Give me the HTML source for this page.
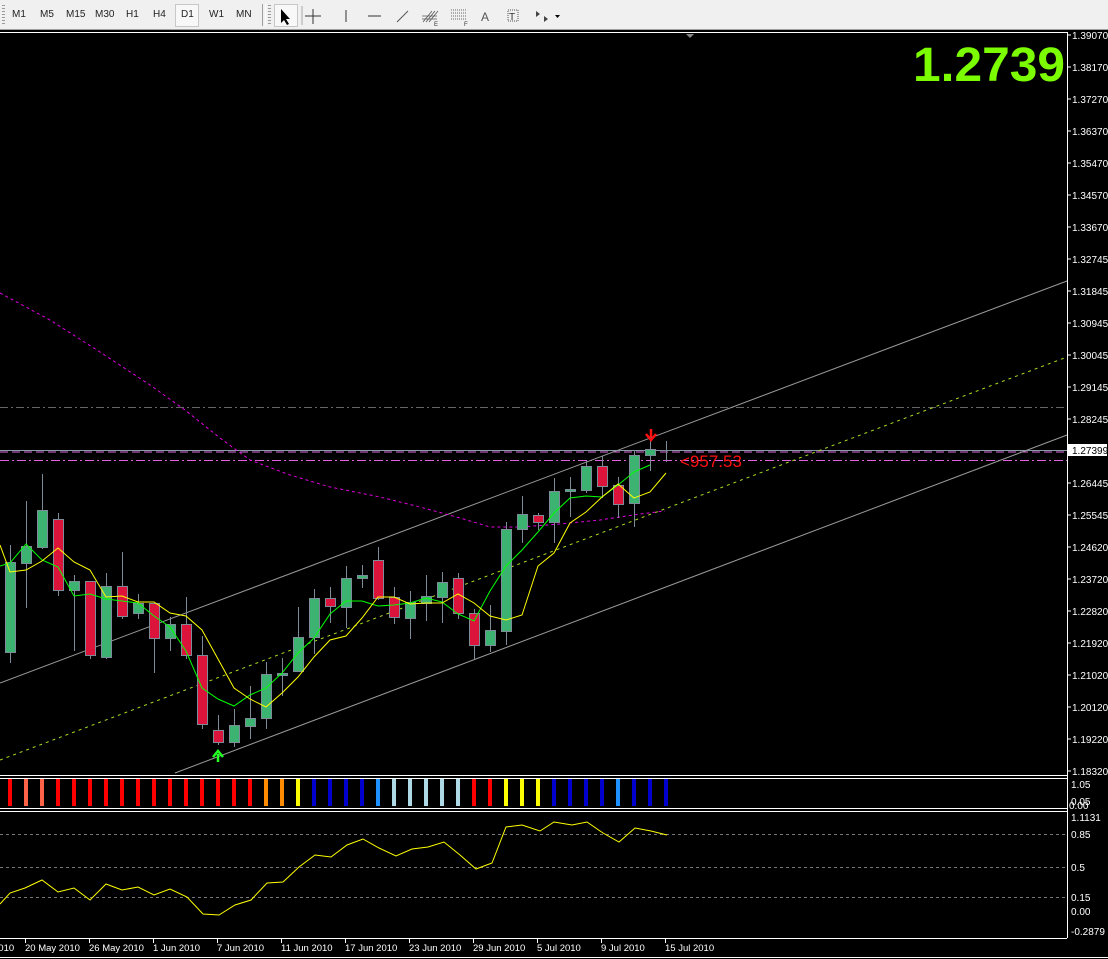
<!DOCTYPE html>
<html><head><meta charset="utf-8"><style>
html,body{margin:0;padding:0;background:#000;width:1108px;height:959px;overflow:hidden;font-family:"Liberation Sans",sans-serif}
#tb{position:absolute;left:0;top:0;width:1108px;height:29px;background:#f0f0f0;border-bottom:1px solid #a0a0a0}
.b{position:absolute;top:9px;font-size:10px;color:#222}
.sep{position:absolute;top:4px;width:2px;height:22px;border-left:1px solid #a0a0a0;border-right:1px solid #fff}
.grip{position:absolute;top:5px;width:3px;height:20px;background:repeating-linear-gradient(#999 0 1px,transparent 1px 3px)}
svg{position:absolute;left:0;top:0}
</style></head><body>
<div id="tb">
<div class="grip" style="left:2px"></div>
<span class="b" style="left:12px">M1</span>
<span class="b" style="left:40px">M5</span>
<span class="b" style="left:66px">M15</span>
<span class="b" style="left:95px">M30</span>
<span class="b" style="left:126px">H1</span>
<span class="b" style="left:153px">H4</span>
<div style="position:absolute;left:175px;top:4px;width:22px;height:21px;border:1px solid #c8c8c8;background:#f8f8f8"></div>
<span class="b" style="left:181px">D1</span>
<span class="b" style="left:209px">W1</span>
<span class="b" style="left:236px">MN</span>
<div class="sep" style="left:262px"></div>
<div class="grip" style="left:268px"></div>
<div style="position:absolute;left:274px;top:4px;width:22px;height:21px;border:1px solid #c8c8c8;background:#f8f8f8"></div>
<svg width="570" height="29" style="position:absolute;left:0;top:0">
<path d="M281 9 L281 23 L284 20 L287 25 L289 24 L286 19 L290 19 Z" fill="#000"/>
<path d="M313 9V24M305 16H321" stroke="#333"/>
<line x1="302" y1="6" x2="302" y2="25" stroke="#aaa"/>
<line x1="346" y1="10" x2="346" y2="22" stroke="#333"/>
<line x1="368" y1="16" x2="381" y2="16" stroke="#333"/>
<line x1="397" y1="22" x2="408" y2="11" stroke="#555"/>
<path d="M423 22L432 11M426 22L435 11M429 22L438 11M422 16H437M422 19H437" stroke="#555" stroke-width=".8"/>
<text x="434" y="26" font-size="6" fill="#333">E</text>
<path d="M451 10H466M451 13H466M451 16H466M451 19H466" stroke="#666" stroke-dasharray="1 1"/>
<text x="464" y="26" font-size="6" fill="#333">F</text>
<text x="481" y="21" font-size="12" fill="#555">A</text>
<rect x="508" y="10" width="10" height="11" fill="none" stroke="#555" stroke-dasharray="1 1"/>
<text x="509" y="20" font-size="10" fill="#333">T</text>
<path d="M536 11l4 3-4 3zM544 16l4 3-4 3z" fill="#444"/><path d="M555 15h5l-2.5 3z" fill="#000"/>
</svg>
</div>

<svg width="1108" height="959" viewBox="0 0 1108 959" style="top:0">
<g>
<line x1="0" y1="32.5" x2="1067" y2="32.5" stroke="#fff"/>
<line x1="1067.5" y1="32" x2="1067.5" y2="938" stroke="#fff"/>
<line x1="0" y1="775.5" x2="1067" y2="775.5" stroke="#fff"/>
<line x1="0" y1="778.5" x2="1067" y2="778.5" stroke="#fff"/>
<line x1="0" y1="808.5" x2="1067" y2="808.5" stroke="#fff"/>
<line x1="0" y1="811.5" x2="1067" y2="811.5" stroke="#fff"/>
<line x1="0" y1="938.5" x2="1067" y2="938.5" stroke="#fff"/>
<line x1="0" y1="957.5" x2="1108" y2="957.5" stroke="#fff"/>
<path d="M686 34h8l-4 4z" fill="#888"/>

<line x1="0" y1="407.5" x2="1067" y2="407.5" stroke="#666" stroke-dasharray="8 3 2 3"/>
<line x1="0" y1="450.5" x2="1067" y2="450.5" stroke="#8a9aaa"/>
<line x1="0" y1="452" x2="1067" y2="452" stroke="#e070e0" stroke-dasharray="8 4"/>
<line x1="0" y1="460.5" x2="1067" y2="460.5" stroke="#e060e0" stroke-dasharray="9 3 2 3"/>

<line x1="0" y1="683" x2="1067" y2="281" stroke="#999"/>
<line x1="175" y1="773" x2="1067" y2="435" stroke="#999"/>
<line x1="0" y1="760" x2="1067" y2="357" stroke="#aadd22" stroke-dasharray="3 4"/>

<polyline fill="none" stroke="#e000e0" stroke-dasharray="3 3" points="0,293 50,320 100,352 150,385 185,410 220,438 250,460 290,475 330,487 380,497 420,507 460,518 490,527 520,527 560,524 600,520 640,514 665,511"/>

<g stroke="#7d8b99" stroke-width="1">
<line x1="10.5" y1="545" x2="10.5" y2="663"/><rect x="5.5" y="562.5" width="10" height="90" fill="#3cb371"/>
<line x1="26.5" y1="501" x2="26.5" y2="608"/><rect x="21.5" y="546.5" width="10" height="17" fill="#3cb371"/>
<line x1="42.5" y1="474" x2="42.5" y2="549"/><rect x="37.5" y="510.5" width="10" height="37" fill="#3cb371"/>
<line x1="58.5" y1="513" x2="58.5" y2="596"/><rect x="53.5" y="519.5" width="10" height="71" fill="#dc143c"/>
<line x1="74.5" y1="575" x2="74.5" y2="651"/><rect x="69.5" y="581.5" width="10" height="9" fill="#3cb371"/>
<line x1="90.5" y1="581" x2="90.5" y2="659"/><rect x="85.5" y="581.5" width="10" height="74" fill="#dc143c"/>
<line x1="106.5" y1="573" x2="106.5" y2="659"/><rect x="101.5" y="586.5" width="10" height="71" fill="#3cb371"/>
<line x1="122.5" y1="552" x2="122.5" y2="619"/><rect x="117.5" y="586.5" width="10" height="30" fill="#dc143c"/>
<line x1="138.5" y1="594" x2="138.5" y2="619"/><rect x="133.5" y="603.5" width="10" height="10" fill="#3cb371"/>
<line x1="154.5" y1="603" x2="154.5" y2="673"/><rect x="149.5" y="603.5" width="10" height="35" fill="#dc143c"/>
<line x1="170.5" y1="617" x2="170.5" y2="651"/><rect x="165.5" y="624.5" width="10" height="14" fill="#3cb371"/>
<line x1="186.5" y1="597" x2="186.5" y2="659"/><rect x="181.5" y="624.5" width="10" height="31" fill="#dc143c"/>
<line x1="202.5" y1="636" x2="202.5" y2="729"/><rect x="197.5" y="655.5" width="10" height="69" fill="#dc143c"/>
<line x1="218.5" y1="715" x2="218.5" y2="745"/><rect x="213.5" y="730.5" width="10" height="12" fill="#dc143c"/>
<line x1="234.5" y1="709" x2="234.5" y2="747"/><rect x="229.5" y="725.5" width="10" height="17" fill="#3cb371"/>
<line x1="250.5" y1="686" x2="250.5" y2="739"/><rect x="245.5" y="718.5" width="10" height="8" fill="#3cb371"/>
<line x1="266.5" y1="662" x2="266.5" y2="729"/><rect x="261.5" y="674.5" width="10" height="44" fill="#3cb371"/>
<line x1="282.5" y1="658" x2="282.5" y2="696"/><rect x="277.5" y="673.5" width="10" height="2" fill="#3cb371"/>
<line x1="298.5" y1="607" x2="298.5" y2="671"/><rect x="293.5" y="637.5" width="10" height="34" fill="#3cb371"/>
<line x1="314.5" y1="589" x2="314.5" y2="654"/><rect x="309.5" y="598.5" width="10" height="39" fill="#3cb371"/>
<line x1="330.5" y1="587" x2="330.5" y2="623"/><rect x="325.5" y="598.5" width="10" height="8" fill="#dc143c"/>
<line x1="346.5" y1="566" x2="346.5" y2="628"/><rect x="341.5" y="578.5" width="10" height="29" fill="#3cb371"/>
<line x1="362.5" y1="565" x2="362.5" y2="588"/><rect x="357.5" y="575.5" width="10" height="3" fill="#3cb371"/>
<line x1="378.5" y1="547" x2="378.5" y2="600"/><rect x="373.5" y="560.5" width="10" height="38" fill="#dc143c"/>
<line x1="394.5" y1="587" x2="394.5" y2="624"/><rect x="389.5" y="597.5" width="10" height="20" fill="#dc143c"/>
<line x1="410.5" y1="591" x2="410.5" y2="639"/><rect x="405.5" y="602.5" width="10" height="16" fill="#3cb371"/>
<line x1="426.5" y1="575" x2="426.5" y2="621"/><rect x="421.5" y="596.5" width="10" height="7" fill="#3cb371"/>
<line x1="442.5" y1="572" x2="442.5" y2="623"/><rect x="437.5" y="582.5" width="10" height="15" fill="#3cb371"/>
<line x1="458.5" y1="573" x2="458.5" y2="619"/><rect x="453.5" y="578.5" width="10" height="35" fill="#dc143c"/>
<line x1="474.5" y1="609" x2="474.5" y2="659"/><rect x="469.5" y="613.5" width="10" height="32" fill="#dc143c"/>
<line x1="490.5" y1="605" x2="490.5" y2="652"/><rect x="485.5" y="630.5" width="10" height="15" fill="#3cb371"/>
<line x1="506.5" y1="522" x2="506.5" y2="645"/><rect x="501.5" y="529.5" width="10" height="102" fill="#3cb371"/>
<line x1="522.5" y1="496" x2="522.5" y2="543"/><rect x="517.5" y="514.5" width="10" height="15" fill="#3cb371"/>
<line x1="538.5" y1="513" x2="538.5" y2="530"/><rect x="533.5" y="515.5" width="10" height="7" fill="#dc143c"/>
<line x1="554.5" y1="478" x2="554.5" y2="543"/><rect x="549.5" y="491.5" width="10" height="31" fill="#3cb371"/>
<line x1="570.5" y1="477" x2="570.5" y2="517"/><rect x="565.5" y="489.5" width="10" height="2" fill="#3cb371"/>
<line x1="586.5" y1="461" x2="586.5" y2="493"/><rect x="581.5" y="466.5" width="10" height="24" fill="#3cb371"/>
<line x1="602.5" y1="456" x2="602.5" y2="498"/><rect x="597.5" y="466.5" width="10" height="20" fill="#dc143c"/>
<line x1="618.5" y1="477" x2="618.5" y2="518"/><rect x="613.5" y="485.5" width="10" height="19" fill="#dc143c"/>
<line x1="634.5" y1="450" x2="634.5" y2="527"/><rect x="629.5" y="455.5" width="10" height="48" fill="#3cb371"/>
<line x1="650.5" y1="441" x2="650.5" y2="471"/><rect x="645.5" y="449.5" width="10" height="6" fill="#3cb371"/>
<line x1="666.5" y1="441" x2="666.5" y2="462"/><line x1="661" y1="450.5" x2="672" y2="450.5"/>
</g>

<polyline fill="none" stroke="#00ff00" points="0,566 10,563 26,544 42,560 58,567 74,596 90,594 106,599 122,601 138,603 154,616 170,627 186,651 202,688 218,699 234,706 250,695 266,688 282,673 298,653 314,638 330,614 346,601 362,601 378,606 394,605 410,603 426,598 442,602 458,614 474,621 490,591 506,566 522,550 538,532 554,513 570,498 586,496 602,497 618,485 634,472 650,465"/>
<polyline fill="none" stroke="#ffff00" points="0,545 10,572 26,570 42,561 58,548 74,562 90,570 106,597 122,596 138,602 154,602 170,613 186,616 202,630 218,659 234,688 250,699 266,707 282,693 298,677 314,657 330,640 346,636 362,618 378,597 394,597 410,604 426,603 442,603 458,594 474,603 490,616 506,620 522,615 538,566 554,553 570,523 586,512 602,497 618,484 634,498 650,492 666,473"/>

<path d="M651 429v8M646 434l5 6 5-6" stroke="#ff1010" stroke-width="2.5" fill="none"/>
<path d="M218 762v-8M213 757l5-6 5 6" stroke="#22ff22" stroke-width="2.5" fill="none"/>

<text x="680" y="467" font-size="17" fill="#ff1010">&lt;957.53</text>
<text x="913" y="81" font-size="48" font-weight="bold" fill="#7cfc00" textLength="152" lengthAdjust="spacingAndGlyphs">1.2739</text>

<g font-size="10" fill="#fff">
<g stroke="#fff">
<line x1="1067" y1="35" x2="1071" y2="35"/><line x1="1067" y1="67" x2="1071" y2="67"/><line x1="1067" y1="99" x2="1071" y2="99"/><line x1="1067" y1="131" x2="1071" y2="131"/><line x1="1067" y1="163" x2="1071" y2="163"/><line x1="1067" y1="195" x2="1071" y2="195"/><line x1="1067" y1="227" x2="1071" y2="227"/><line x1="1067" y1="259" x2="1071" y2="259"/><line x1="1067" y1="291" x2="1071" y2="291"/><line x1="1067" y1="323" x2="1071" y2="323"/><line x1="1067" y1="355" x2="1071" y2="355"/><line x1="1067" y1="387" x2="1071" y2="387"/><line x1="1067" y1="419" x2="1071" y2="419"/><line x1="1067" y1="483" x2="1071" y2="483"/><line x1="1067" y1="515" x2="1071" y2="515"/><line x1="1067" y1="547" x2="1071" y2="547"/><line x1="1067" y1="579" x2="1071" y2="579"/><line x1="1067" y1="611" x2="1071" y2="611"/><line x1="1067" y1="643" x2="1071" y2="643"/><line x1="1067" y1="675" x2="1071" y2="675"/><line x1="1067" y1="707" x2="1071" y2="707"/><line x1="1067" y1="739" x2="1071" y2="739"/><line x1="1067" y1="771" x2="1071" y2="771"/>
</g>
<text x="1072" y="39">1.39070</text><text x="1072" y="71">1.38170</text><text x="1072" y="103">1.37270</text><text x="1072" y="135">1.36370</text><text x="1072" y="167">1.35470</text><text x="1072" y="199">1.34570</text><text x="1072" y="231">1.33670</text><text x="1072" y="263">1.32745</text><text x="1072" y="295">1.31845</text><text x="1072" y="327">1.30945</text><text x="1072" y="359">1.30045</text><text x="1072" y="391">1.29145</text><text x="1072" y="423">1.28245</text>
<rect x="1068" y="444" width="39" height="12" fill="#fff"/><text x="1072" y="454" fill="#000">1.27399</text>
<text x="1072" y="487">1.26445</text><text x="1072" y="519">1.25545</text><text x="1072" y="551">1.24620</text><text x="1072" y="583">1.23720</text><text x="1072" y="615">1.22820</text><text x="1072" y="647">1.21920</text><text x="1072" y="679">1.21020</text><text x="1072" y="711">1.20120</text><text x="1072" y="743">1.19220</text><text x="1072" y="775">1.18320</text>
<text x="1071" y="788">1.05</text><text x="1071" y="805">0.05</text><text x="1069" y="809">0.00</text>
<text x="1071" y="821">1.1131</text><text x="1071" y="838">0.85</text><text x="1071" y="871">0.5</text><text x="1071" y="901">0.15</text><text x="1071" y="915">0.00</text><text x="1071" y="935">-0.2879</text>
</g>

<g stroke-width="4">
<line x1="10" y1="779" x2="10" y2="806" stroke="#ff0000"/>
<line x1="26" y1="779" x2="26" y2="806" stroke="#ff6347"/>
<line x1="42" y1="779" x2="42" y2="806" stroke="#ff6347"/>
<line x1="58" y1="779" x2="58" y2="806" stroke="#ff0000"/><line x1="74" y1="779" x2="74" y2="806" stroke="#ff0000"/><line x1="90" y1="779" x2="90" y2="806" stroke="#ff0000"/><line x1="106" y1="779" x2="106" y2="806" stroke="#ff0000"/><line x1="122" y1="779" x2="122" y2="806" stroke="#ff0000"/><line x1="138" y1="779" x2="138" y2="806" stroke="#ff0000"/><line x1="154" y1="779" x2="154" y2="806" stroke="#ff0000"/><line x1="170" y1="779" x2="170" y2="806" stroke="#ff0000"/><line x1="186" y1="779" x2="186" y2="806" stroke="#ff0000"/><line x1="202" y1="779" x2="202" y2="806" stroke="#ff0000"/><line x1="218" y1="779" x2="218" y2="806" stroke="#ff0000"/><line x1="234" y1="779" x2="234" y2="806" stroke="#ff0000"/><line x1="250" y1="779" x2="250" y2="806" stroke="#ff0000"/>
<line x1="266" y1="779" x2="266" y2="806" stroke="#ff8c00"/><line x1="282" y1="779" x2="282" y2="806" stroke="#ff8c00"/>
<line x1="298" y1="779" x2="298" y2="806" stroke="#ffff00"/>
<line x1="314" y1="779" x2="314" y2="806" stroke="#0000cd"/><line x1="330" y1="779" x2="330" y2="806" stroke="#0000cd"/><line x1="346" y1="779" x2="346" y2="806" stroke="#0000cd"/><line x1="362" y1="779" x2="362" y2="806" stroke="#0000cd"/>
<line x1="378" y1="779" x2="378" y2="806" stroke="#1e90ff"/>
<line x1="394" y1="779" x2="394" y2="806" stroke="#add8e6"/><line x1="410" y1="779" x2="410" y2="806" stroke="#add8e6"/><line x1="426" y1="779" x2="426" y2="806" stroke="#add8e6"/><line x1="442" y1="779" x2="442" y2="806" stroke="#add8e6"/><line x1="458" y1="779" x2="458" y2="806" stroke="#add8e6"/>
<line x1="474" y1="779" x2="474" y2="806" stroke="#ff0000"/><line x1="490" y1="779" x2="490" y2="806" stroke="#ff0000"/>
<line x1="506" y1="779" x2="506" y2="806" stroke="#ffff00"/><line x1="522" y1="779" x2="522" y2="806" stroke="#ffff00"/><line x1="538" y1="779" x2="538" y2="806" stroke="#ffff00"/>
<line x1="554" y1="779" x2="554" y2="806" stroke="#0000cd"/><line x1="570" y1="779" x2="570" y2="806" stroke="#0000cd"/><line x1="586" y1="779" x2="586" y2="806" stroke="#0000cd"/><line x1="602" y1="779" x2="602" y2="806" stroke="#0000cd"/>
<line x1="618" y1="779" x2="618" y2="806" stroke="#1e90ff"/>
<line x1="634" y1="779" x2="634" y2="806" stroke="#0000cd"/><line x1="650" y1="779" x2="650" y2="806" stroke="#0000cd"/><line x1="666" y1="779" x2="666" y2="806" stroke="#0000cd"/>
</g>

<g stroke="#777" stroke-dasharray="3 3">
<line x1="0" y1="834.5" x2="1067" y2="834.5"/><line x1="0" y1="867.5" x2="1067" y2="867.5"/><line x1="0" y1="897.5" x2="1067" y2="897.5"/>
</g>
<polyline fill="none" stroke="#ffff00" points="0,904 10,893 25,888 42,880 58,892 74,888 90,900 106,884 122,890 138,887 154,895 170,889 187,897 203,914 219,915 235,905 251,900 267,883 283,882 299,867 315,855 331,857 347,845 363,839 379,848 396,856 412,849 428,847 444,842 460,855 476,869 492,863 506,827 522,825 540,831 554,822 572,825 587,822 603,833 619,842 635,828 651,831 667,835"/>

<g font-size="9.5" fill="#fff">
<g stroke="#fff"><line x1="25.5" y1="938" x2="25.5" y2="943"/><line x1="89.5" y1="938" x2="89.5" y2="943"/><line x1="153.5" y1="938" x2="153.5" y2="943"/><line x1="217.5" y1="938" x2="217.5" y2="943"/><line x1="281.5" y1="938" x2="281.5" y2="943"/><line x1="345.5" y1="938" x2="345.5" y2="943"/><line x1="409.5" y1="938" x2="409.5" y2="943"/><line x1="473.5" y1="938" x2="473.5" y2="943"/><line x1="537.5" y1="938" x2="537.5" y2="943"/><line x1="601.5" y1="938" x2="601.5" y2="943"/><line x1="665.5" y1="938" x2="665.5" y2="943"/></g>
<text x="-7" y="951">2010</text><text x="25" y="951">20 May 2010</text><text x="89" y="951">26 May 2010</text><text x="153" y="951">1 Jun 2010</text><text x="217" y="951">7 Jun 2010</text><text x="281" y="951">11 Jun 2010</text><text x="345" y="951">17 Jun 2010</text><text x="409" y="951">23 Jun 2010</text><text x="473" y="951">29 Jun 2010</text><text x="537" y="951">5 Jul 2010</text><text x="601" y="951">9 Jul 2010</text><text x="665" y="951">15 Jul 2010</text>
</g>
</g>
</svg>
</body></html>
